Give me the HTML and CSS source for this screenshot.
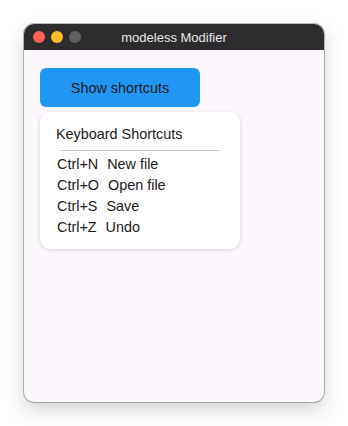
FILE: index.html
```html
<!DOCTYPE html>
<html lang="en">
<head>
    <meta charset="UTF-8">
    <title>modeless Modifier</title>
    <link rel="stylesheet" href="styles.css">
</head>
<body>
    <div class="window">
        <div class="titlebar">
            <div class="lights">
                <span class="light red"></span>
                <span class="light yellow"></span>
                <span class="light gray"></span>
            </div>
            <div class="title">modeless Modifier</div>
        </div>
        <div class="content">
            <button class="show-btn">Show shortcuts</button>
            <div class="shortcuts">
                <div class="shortcuts-title">Keyboard Shortcuts</div>
                <hr class="divider">
                <div class="row"><span class="key">Ctrl+N</span><span>New file</span></div>
                <div class="row"><span class="key">Ctrl+O</span><span>Open file</span></div>
                <div class="row"><span class="key">Ctrl+S</span><span>Save</span></div>
                <div class="row"><span class="key">Ctrl+Z</span><span>Undo</span></div>
            </div>
        </div>
    </div>
</body>
</html>
```
FILE: styles.css
```css
body {
    margin: 0;
    padding: 24px;
    background-color: #fff;
    font-family: "Liberation Sans", Arial, sans-serif;
}
.window {
    width: 300px;
    height: 378px;
    border-radius: 10px;
    overflow: hidden;
    background-color: #fcf7fd;
    box-shadow: 0 0 0 1px rgba(0, 0, 0, 0.25), 0 8px 20px rgba(0, 0, 0, 0.18);
    display: flex;
    flex-direction: column;
}
.titlebar {
    position: relative;
    height: 26px;
    background-color: #2c2c2e;
    display: flex;
    align-items: center;
    justify-content: center;
    flex-shrink: 0;
}
.lights {
    position: absolute;
    left: 9px;
    top: 7px;
    display: flex;
    gap: 6px;
}
.light {
    width: 12px;
    height: 12px;
    border-radius: 50%;
}
.red { background-color: #fe5f57; }
.yellow { background-color: #febc2e; }
.gray { background-color: #5f5f62; }
.title {
    color: #e8e8e8;
    font-size: 13px;
}
.content {
    padding: 18px 16px;
}
.show-btn {
    display: block;
    width: 160px;
    height: 39px;
    border: none;
    border-radius: 6px;
    background-color: #2196f3;
    color: #1a1a1a;
    font-family: inherit;
    font-size: 14.4px;
    padding: 0;
}
.shortcuts {
    width: 200px;
    margin-top: 5px;
    box-sizing: border-box;
    background-color: #fff;
    border-radius: 10px;
    box-shadow: 0 1px 4px rgba(0, 0, 0, 0.15);
    padding: 14px 16px 11px 16px;
    color: #1a1a1a;
    font-size: 14.4px;
}
.shortcuts-title {
    line-height: 16px;
}
.divider {
    border: none;
    border-top: 1px solid #c8c4c8;
    margin: 8px 4px 3px 4px;
}
.row {
    line-height: 21px;
    padding-left: 1px;
}
.key {
    margin-right: 9px;
}
```
